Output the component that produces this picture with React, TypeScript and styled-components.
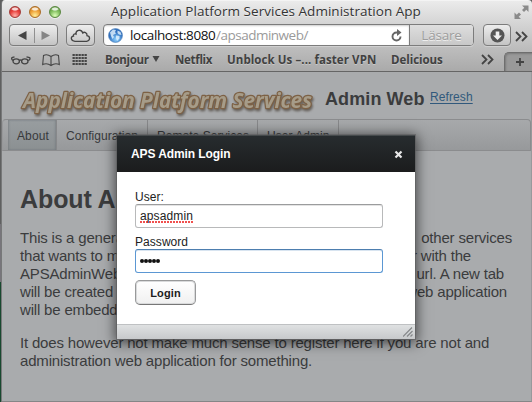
import React from 'react';
import styled, { createGlobalStyle, css } from 'styled-components';

const GlobalStyle = createGlobalStyle`
  * { box-sizing: border-box; }
  html, body { margin: 0; height: 100%; overflow: hidden; }
  body { font-family: "Liberation Sans", Arial, sans-serif; color: #3b3c3d; }
  p, h1, h2 { margin: 0; }
`;

const chromeFont = css`
  font-family: "Open Sans", "Noto Sans", sans-serif;
`;

const Desktop = styled.div`
  width: 532px;
  height: 402px;
  display: flex;
  padding-left: 1px;
  background: linear-gradient(#5f6060 0 224px, #77757b 224px 282px, #18492f 282px);
`;

const BrowserWindow = styled.div`
  flex: 1;
  display: flex;
  flex-direction: column;
  position: relative;
  border-radius: 4px 4px 0 0;
  overflow: hidden;
  border-left: 1px solid #777879;
`;

const Chrome = styled.header`
  height: 72px;
  flex: none;
  display: flex;
  flex-direction: column;
  background: linear-gradient(#ebebeb 0, #d5d5d5 22px, #bcbcbc 48px, #a9a9a9 71px);
  border-top: 1px solid #f4f4f4;
  border-bottom: 1px solid #656565;
  ${chromeFont}
`;

const TitleBar = styled.div`
  height: 22px;
  display: flex;
  align-items: center;
  padding: 0 3px 0 7px;
`;

const Lights = styled.div`
  display: flex;
  gap: 8px;
  width: 102px;
`;

const Light = styled.span<{ $rim: string; $dark: string; $mid: string; $glow: string }>`
  width: 12px;
  height: 12px;
  border-radius: 50%;
  border: 1px solid ${p => p.$rim};
  background:
    radial-gradient(ellipse 4px 2px at 50% 20%, #fffc 0 60%, transparent),
    radial-gradient(circle at 50% 85%, ${p => p.$glow}, ${p => p.$mid} 50%, ${p => p.$dark});
  box-shadow: 0 1px 0 #fff8;
`;

const WindowTitle = styled.h1`
  font-size: 13.5px;
  font-weight: 400;
  line-height: 20px;
  letter-spacing: 0.03px;
  color: #343434;
  white-space: nowrap;
  text-shadow: 0 1px 0 #fff8;
  padding-bottom: 2px;
  flex: 1;
`;

const Toolbar = styled.div`
  height: 25px;
  display: flex;
  align-items: flex-start;
  padding: 1px 3px 0 7px;
`;

const ToolButton = styled.div<{ $width: number; $gap: number }>`
  width: ${p => p.$width}px;
  height: 22px;
  margin-right: ${p => p.$gap}px;
  display: flex;
  align-items: center;
  justify-content: center;
  border: 1px solid #7c7c7c;
  border-radius: 4px;
  background: linear-gradient(#ededed, #c4c4c4);
  box-shadow: 0 1px 0 #e0e0e088;
`;

const AddressBar = styled.div`
  width: 371px;
  height: 22px;
  display: flex;
  margin-right: 9px;
  border: 1px solid #7c7c7c;
  border-radius: 4px;
  overflow: hidden;
  background: #fff;
  box-shadow: 0 1px 0 #e0e0e088;
`;

const AddressField = styled.div`
  width: 305px;
  display: flex;
  align-items: center;
  padding: 0 7px 0 4px;
  box-shadow: inset 0 1px 2px #0003;
`;

const Address = styled.span`
  flex: 1;
  margin-left: 7px;
  font-size: 13.5px;
  line-height: 20px;
  color: #111;
  white-space: nowrap;
`;

const Host = styled.span`
  display: inline-block;
  width: 86px;
  letter-spacing: -0.4px;
`;

const Path = styled.span`
  letter-spacing: -0.5px;
  color: #9a9a9a;
`;

const Reader = styled.div`
  flex: 1;
  border-left: 1px solid #7c7c7c;
  background: linear-gradient(#dedede, #c8c8c8);
  color: #9d9d9d;
  font-size: 13.5px;
  line-height: 20px;
  letter-spacing: -0.2px;
  text-align: center;
  text-shadow: 0 1px 0 #eee;
`;

const Bookmarks = styled.nav`
  flex: 1;
  display: flex;
  align-items: stretch;
  padding-left: 9px;
`;

const BookmarkIcon = styled.span<{ $width: number; $drop?: number }>`
  width: ${p => p.$width}px;
  padding-top: ${p => p.$drop ?? 5}px;
  line-height: 0;
`;

const Bookmark = styled.span<{ $width: number; $track?: number }>`
  width: ${p => p.$width}px;
  display: flex;
  align-items: center;
  gap: 3px;
  height: 22px;
  font-size: 11.5px;
  font-weight: 700;
  letter-spacing: ${p => p.$track ?? 0}px;
  color: #414141;
  white-space: nowrap;
  text-shadow: 0 1px 0 #ddd8;
`;

const NewTab = styled.span`
  width: 30px;
  height: 19px;
  margin: 4px -2px 0 auto;
  display: flex;
  align-items: center;
  justify-content: center;
  border: 1px solid #6e6e6e;
  border-width: 1px 0 0 1px;
  border-radius: 5px 0 0 0;
  background: #999;
  box-shadow: inset 1px 1px 2px #0003;
`;

const Page = styled.main`
  flex: 1;
  display: flex;
  flex-direction: column;
  background: #a9abad;
  border-right: 1px solid #98999b;
  border-bottom: 1px solid #858687;
`;

const Banner = styled.div`
  height: 47px;
  display: flex;
  padding-left: 15px;
`;

const BannerTitle = styled.h2`
  width: 105px;
  margin-left: 5px;
  padding-top: 17px;
  font-size: 18px;
  line-height: 21px;
  letter-spacing: 0.1px;
  white-space: nowrap;
`;

const Refresh = styled.a`
  padding-top: 18px;
  font-size: 12px;
  line-height: 14px;
  letter-spacing: 0.1px;
  color: #31597c;
  text-decoration: underline;
  text-underline-offset: 2px;
`;

const MenuBar = styled.div`
  height: 32px;
  flex: none;
  display: flex;
  padding-left: 5px;
  border: 1px solid #8b8c8e;
  border-left-color: #97989a;
  border-radius: 4px 4px 0 0;
  background: linear-gradient(#a7a9ab, #97999b);
`;

const MenuItem = styled.span<{ $width: number; $active?: boolean }>`
  width: ${p => p.$width}px;
  padding-left: 9px;
  border-right: 1px solid #87888a;
  font-size: 12px;
  line-height: 32px;
  letter-spacing: ${p => (p.$active ? 0.1 : 0.05)}px;
  white-space: nowrap;
  color: #38393b;
  box-shadow: ${p => (p.$active ? 'inset 1px 0 2px #6f757888, inset -1px 0 2px #6f757888' : 'none')};
  background: ${p => (p.$active ? 'linear-gradient(#989da0, #8b9092)' : 'none')};
`;

const Article = styled.section`
  padding: 33px 0 0 18px;
  font-size: 15px;
  line-height: 18px;
  letter-spacing: -0.18px;
`;

const Heading = styled.h2`
  font-size: 25px;
  line-height: 30px;
  letter-spacing: -0.1px;
  margin-bottom: 15px;
`;

const Line = styled.span<{ $width: number }>`
  width: ${p => p.$width}px;
  display: flex;
  justify-content: space-between;
  white-space: nowrap;
`;

const Paragraph = styled.p`
  margin-bottom: 15px;
  white-space: nowrap;
`;

const Dialog = styled.div`
  position: absolute;
  left: 115px;
  top: 135px;
  width: 298px;
  height: 204px;
  display: flex;
  flex-direction: column;
  background: #fff;
  box-shadow: 0 0 0 1px #5d5e5f99, 0 2px 12px 2px #0009;
  color: #222;
`;

const DialogHeader = styled.div`
  height: 37px;
  display: flex;
  align-items: center;
  justify-content: space-between;
  padding: 0 12px 0 14px;
  background: linear-gradient(#272c2f, #1b1c1d);
  border-top: 1px solid #454a4c;
  color: #fff;
  font-size: 12px;
  font-weight: 700;
  letter-spacing: -0.1px;
`;

const Form = styled.div`
  flex: 1;
  display: flex;
  flex-direction: column;
  align-items: flex-start;
  padding: 18px 18px 0;
`;

const Label = styled.label`
  font-size: 12px;
  line-height: 14px;
  letter-spacing: 0.05px;
`;

const Field = styled.div<{ $focused?: boolean }>`
  width: 248px;
  height: 24px;
  display: flex;
  align-items: center;
  margin-bottom: 7px;
  padding: 0 4px;
  border: 1px solid ${p => (p.$focused ? '#5b97d3' : '#b8b9ba')};
  border-top-color: ${p => (p.$focused ? '#4d7eaf' : '#9b9c9d')};
  border-radius: 3px;
  box-shadow: inset 0 1px 0 ${p => (p.$focused ? '#d8e4f0' : '#e4e4e4')};
  font-size: 12px;
  letter-spacing: 0.12px;
`;

const Misspelled = styled.span`
  line-height: 14px;
  background: radial-gradient(circle at 1px 1px, #f0504e 0.8px, transparent 1.2px) 0 100% / 3px 2px repeat-x;
`;

const Dots = styled.span`
  display: flex;
  padding-bottom: 1px;
`;

const Dot = styled.i`
  width: 4px;
  height: 4px;
  border-radius: 50%;
  background: #111;
`;

const LoginButton = styled.button`
  width: 61px;
  height: 25px;
  padding: 0;
  border: 1px solid #98999a;
  border-bottom-color: #777;
  border-radius: 5px;
  background: linear-gradient(#fff, #f0f0f0);
  box-shadow: inset 0 0 0 1px #d9dadb;
  font: 700 11px/14px "Liberation Sans", Arial, sans-serif;
  letter-spacing: 0.15px;
  color: #1c1c1c;
`;

const DialogFooter = styled.div`
  height: 15px;
  display: flex;
  justify-content: flex-end;
  align-items: flex-end;
  padding: 0 2px 2px 0;
  border-top: 1px solid #bfc1c3;
  background: linear-gradient(#dfe1e2, #c7c9cb);
`;

const LogoArt = styled.svg`
  filter: drop-shadow(1px 2px 1px #3a302799);
`;

const Chevrons = () => (
  <svg width="13" height="11" viewBox="0 0 13 11" fill="none" stroke="#444" strokeWidth="1.8">
    <path d="M1 1l4.500 4.500L1 10M7 1l4.500 4.500L7 10" />
  </svg>
);

const Glasses = () => (
  <svg width="20" height="14" viewBox="0 0 20 14" fill="none" stroke="#454545" strokeWidth="1.3">
    <ellipse cx="5.200" cy="8.300" rx="3.200" ry="2.500" />
    <ellipse cx="13.800" cy="8.300" rx="3.200" ry="2.500" />
    <path d="M8 7.500q1.400-1 2.800 0M2 7.500Q0 6 1 4.500L3.500 3.800M17 7.500Q20 6.500 18.500 4.500L15.500 3.800" />
  </svg>
);

const Book = () => (
  <svg width="18" height="14" viewBox="0 0 18 14" fill="none" stroke="#454545" strokeWidth="1.1">
    <path d="M9 3.500Q5 .5 1.500 2.500L.7 11.500Q5 9.500 9 12.500Q13 9.500 17.300 11.500L16.500 2.500Q13 .5 9 3.500V12.500" />
  </svg>
);

const Grid = () => (
  <svg width="16" height="14" viewBox="0 0 16 14" fill="#454545">
    {[1, 4, 7, 10].map(y => [0, 3, 6, 9, 12].map(x => <rect key={`${x}-${y}`} x={x + 0.5} y={y} width="2.3" height="2" />))}
  </svg>
);

const Globe = () => (
  <svg width="15" height="15" viewBox="0 0 15 15">
    <defs>
      <radialGradient id="globe" cx=".55" cy=".75">
        <stop offset="0" stopColor="#8fd2ff" />
        <stop offset="1" stopColor="#2f6fbe" />
      </radialGradient>
    </defs>
    <circle cx="7.5" cy="7.5" r="7" fill="url(#globe)" stroke="#5585b8" strokeWidth=".6" />
    <path d="M2 4.500L5 1.500 8 2 7 4 8 5.500 5 7 6 9 4.500 11 3 8zM9.500 2.500L12.500 4 13.500 7 11 6.500 9.500 5zM8 7.500L11.500 8 11.500 10.500 9 13 8 10z" fill="#e6f5ff" opacity=".8" />
  </svg>
);

const Logo = () => (
  <LogoArt width="303" height="47" viewBox="0 0 303 47">
    <text
      x="6"
      y="36"
      textLength="289"
      lengthAdjust="spacingAndGlyphs"
      fontFamily="Open Sans, Noto Sans, sans-serif"
      fontSize="21"
      fontWeight="700"
      fontStyle="italic"
      fill="#a69c89"
      stroke="#7d6145"
      strokeWidth="2.4"
      strokeLinejoin="round"
      paintOrder="stroke"
    >
      Application Platform Services
    </text>
  </LogoArt>
);

export default function App() {
  return (
    <>
      <GlobalStyle />
      <Desktop>
        <BrowserWindow>
          <Chrome>
            <TitleBar>
              <Lights>
                <Light $rim="#a33c39" $dark="#b52924" $mid="#e8413d" $glow="#ffb0a8" />
                <Light $rim="#aa6d27" $dark="#c0761c" $mid="#efa33a" $glow="#fff09a" />
                <Light $rim="#5a8741" $dark="#4d8c31" $mid="#83bf60" $glow="#dcffb8" />
              </Lights>
              <WindowTitle>Application Platform Services Administration App</WindowTitle>
              <svg width="15" height="15" viewBox="0 0 15 15" fill="#8a8a8a">
                <path d="M8 .5h6.500V7L12.300 4.800 10 7.100 8 5.100 10.300 2.800zM7 14H.5V7.500l2.200 2.200 2.300-2.300 2 2-2.300 2.300z" />
              </svg>
            </TitleBar>
            <Toolbar>
              <ToolButton $width={49} $gap={8}>
                <svg width="47" height="20" viewBox="0 0 47 20">
                  <path d="M8 10.500L16.500 6v9z" fill="#454545" />
                  <path d="M24.500 3v15" stroke="#909090" />
                  <path d="M40 10.500L31.500 6v9z" fill="#858585" />
                </svg>
              </ToolButton>
              <ToolButton $width={29} $gap={8}>
                <svg width="21" height="15" viewBox="0 0 21 15" fill="none" stroke="#454545" strokeWidth="1.3">
                  <path d="M5 13.300H16.500C20.500 13 20.500 8.200 17 7.700C17.500 4.500 14 3.500 12.800 5C11 .5 5.500 2 6 6.200C4.500 5.500 3 6.500 3.500 8C.3 8.500.5 13 5 13.300Z" />
                </svg>
              </ToolButton>
              <AddressBar>
                <AddressField>
                  <Globe />
                  <Address><Host>localhost:8080</Host><Path>/apsadminweb/</Path></Address>
                  <svg width="11" height="13" viewBox="0 0 11 13">
                    <path d="M7 3.500H5.500a4 4 0 1 0 4 4" fill="none" stroke="#666" strokeWidth="1.9" />
                    <path d="M6 0l4.500 3.500L6 7z" fill="#666" />
                  </svg>
                </AddressField>
                <Reader>Läsare</Reader>
              </AddressBar>
              <ToolButton $width={28} $gap={4}>
                <svg width="15" height="15" viewBox="0 0 15 15">
                  <circle cx="7.5" cy="7.5" r="7" fill="#555" />
                  <path d="M5.700 3.500h3.600v4H12L7.500 12 3 7.500h2.700z" fill="#eee" />
                </svg>
              </ToolButton>
              <BookmarkIcon $width={13} $drop={7}><Chevrons /></BookmarkIcon>
            </Toolbar>
            <Bookmarks>
              <BookmarkIcon $width={31}><Glasses /></BookmarkIcon>
              <BookmarkIcon $width={30}><Book /></BookmarkIcon>
              <BookmarkIcon $width={33}><Grid /></BookmarkIcon>
              <Bookmark $width={70} $track={-0.3}>
                Bonjour
                <svg width="8" height="6" viewBox="0 0 8 6"><path d="M.5 0h7L4 6z" fill="#454545" /></svg>
              </Bookmark>
              <Bookmark $width={52} $track={-0.3}>Netflix</Bookmark>
              <Bookmark $width={164} $track={0.08}>Unblock Us –... faster VPN</Bookmark>
              <Bookmark $width={90} $track={-0.05}>Delicious</Bookmark>
              <BookmarkIcon $width={14} $drop={6}><Chevrons /></BookmarkIcon>
              <NewTab>
                <svg width="8" height="8" viewBox="0 0 8 8"><path d="M4 0v8M0 4h8" stroke="#444" strokeWidth="1.8" /></svg>
              </NewTab>
            </Bookmarks>
          </Chrome>

          <Page>
            <Banner>
              <Logo />
              <BannerTitle>Admin Web</BannerTitle>
              <Refresh>Refresh</Refresh>
            </Banner>
            <MenuBar>
              <MenuItem $width={49} $active>About</MenuItem>
              <MenuItem $width={91}>Configuration</MenuItem>
              <MenuItem $width={110}>Remote Services</MenuItem>
              <MenuItem $width={81}>User Admin</MenuItem>
            </MenuBar>
            <Article>
              <Heading>About APS</Heading>
              <Paragraph>
                <Line $width={492}><span>This is a general tool</span><span>other services</span></Line>
                <Line $width={451}><span>that wants to make</span><span>register with the</span></Line>
                <Line $width={484}><span>APSAdminWeb</span><span>and url. A new tab</span></Line>
                <Line $width={487}><span>will be created</span><span>and the web application</span></Line>
                <Line $width={300}><span>will be embedded.</span></Line>
              </Paragraph>
              <Paragraph>
                It does however not make much sense to register here if you are not and
                <br />
                administration web application for something.
              </Paragraph>
            </Article>
          </Page>

          <Dialog role="dialog">
            <DialogHeader>
              <span>APS Admin Login</span>
              <svg width="9" height="9" viewBox="0 0 9 9"><path d="M1.500 1.500l6 6M7.500 1.500l-6 6" stroke="#e8e8e8" strokeWidth="2.2" /></svg>
            </DialogHeader>
            <Form>
              <Label>User:</Label>
              <Field><Misspelled>apsadmin</Misspelled></Field>
              <Label>Password</Label>
              <Field $focused>
                <Dots><Dot /><Dot /><Dot /><Dot /><Dot /></Dots>
              </Field>
              <LoginButton>Login</LoginButton>
            </Form>
            <DialogFooter>
              <svg width="10" height="10" viewBox="0 0 10 10" stroke="#858789" strokeWidth="1.2">
                <path d="M0 9.500L9 .5M4 9.500L9.500 4M7.500 9.500L9.500 7.500" />
              </svg>
            </DialogFooter>
          </Dialog>
        </BrowserWindow>
      </Desktop>
    </>
  );
}
